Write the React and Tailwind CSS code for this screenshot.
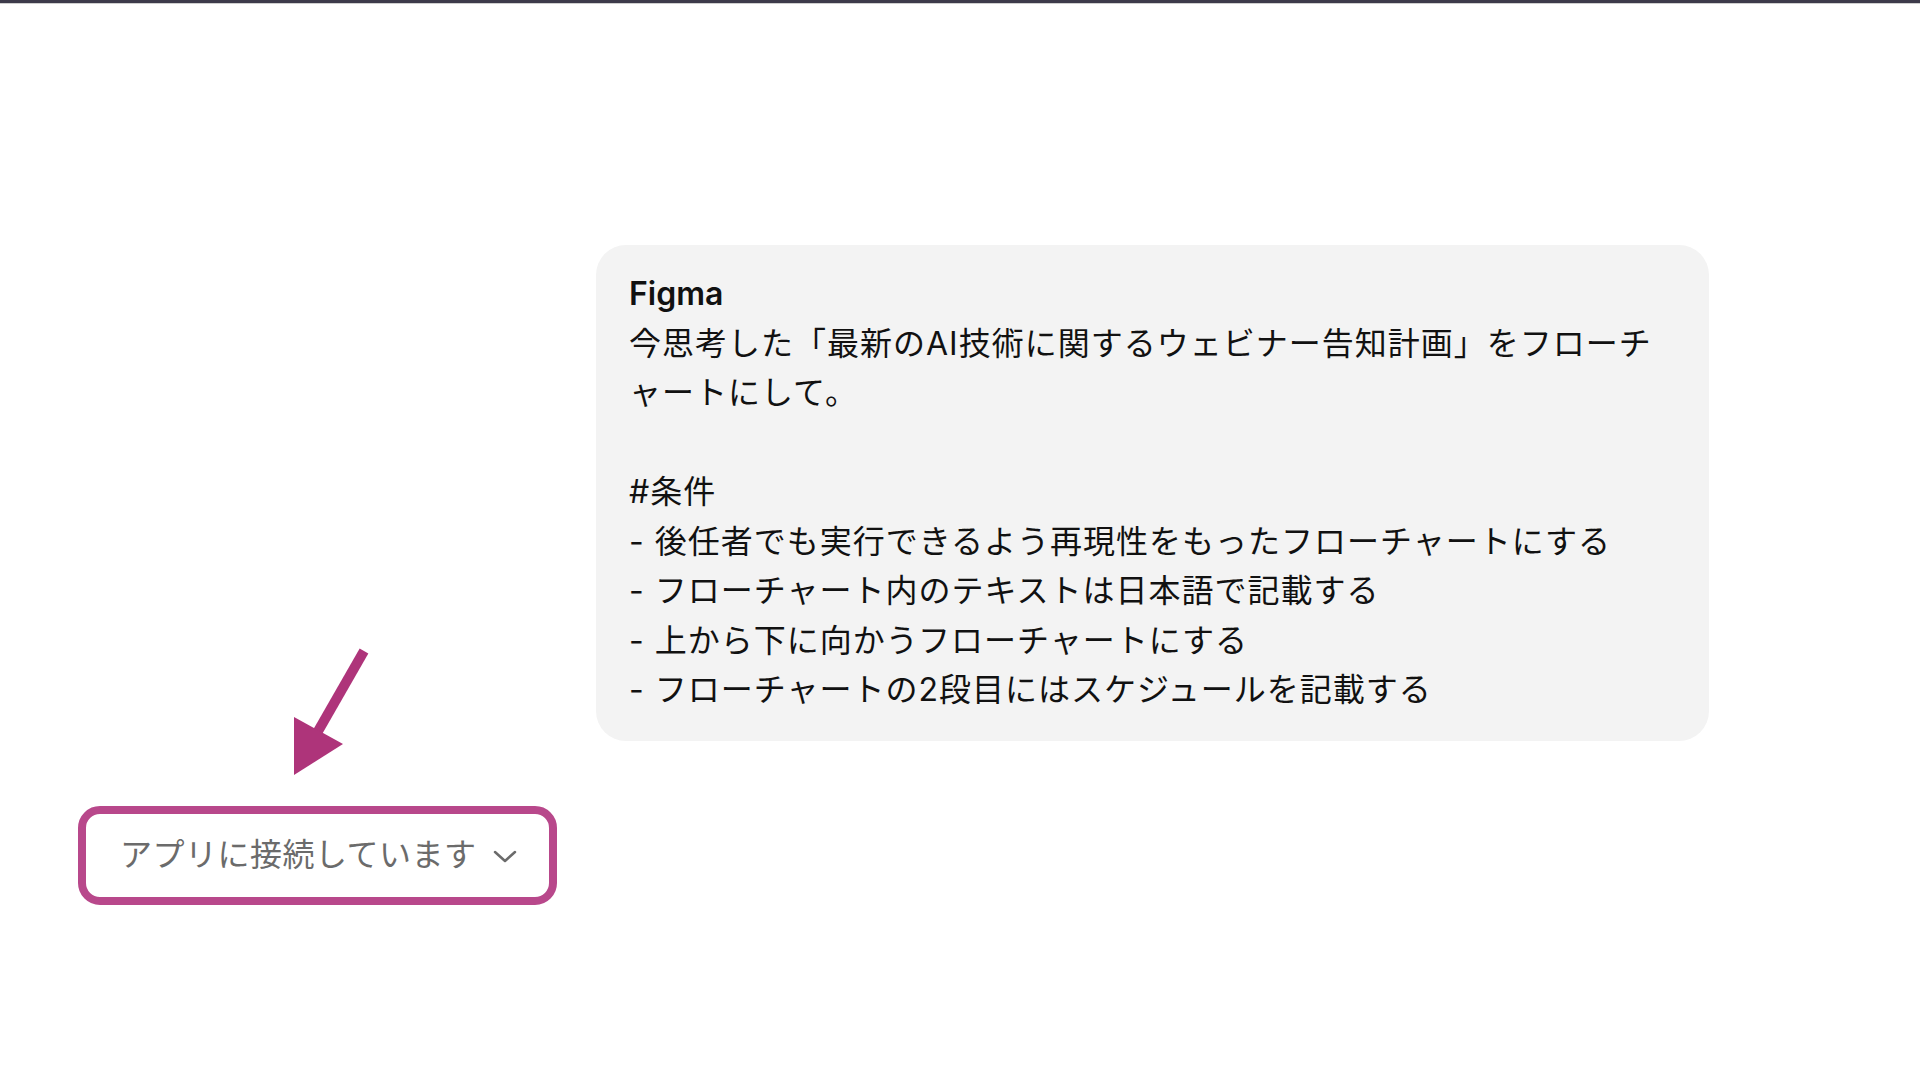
import React from "react";

const lines = [
  "今思考した「最新のAI技術に関するウェビナー告知計画」をフローチ",
  "ャートにして。",
  "",
  "#条件",
  "- 後任者でも実行できるよう再現性をもったフローチャートにする",
  "- フローチャート内のテキストは日本語で記載する",
  "- 上から下に向かうフローチャートにする",
  "- フローチャートの2段目にはスケジュールを記載する",
];

const App = () => {
  return (
    <div
      className="relative w-full h-[1080px] bg-white overflow-hidden"
      style={{ fontFamily: "Inter, 'Noto Sans CJK JP', sans-serif" }}
    >
      {/* window edge */}
      <div className="h-[3px] bg-[#3d3a4a]" />
      <div className="h-px bg-[#cfcfcf]" />

      <div className="pt-[241px]">
        {/* message bubble */}
        <div className="ml-[596px] w-[1113px] rounded-[30px] bg-[#f3f3f3] px-[33px] pt-[24px] pb-[26px] text-[32px] leading-[49.5px] tracking-[1px] text-[#111]">
          <div className="font-semibold tracking-normal">Figma</div>
          {lines.map((line, i) => (
            <div key={i} className="whitespace-pre">
              {line || "\u00a0"}
            </div>
          ))}
        </div>

        {/* highlighted status button */}
        <div className="ml-[78px] mt-[65px] w-[479px] h-[99px] rounded-[22px] border-[8px] border-[#b8488b] flex items-center pl-[34px]">
          <span className="text-[32px] tracking-[0.5px] text-[#6b6b6b]">
            アプリに接続しています
          </span>
          <svg
            className="ml-[16px] mt-[4px]"
            width="24"
            height="14"
            viewBox="0 0 24 14"
            fill="none"
          >
            <path
              d="M2 2 L12 11 L22 2"
              stroke="#6b6b6b"
              strokeWidth="2.5"
              strokeLinecap="round"
              strokeLinejoin="round"
            />
          </svg>
        </div>
      </div>

      {/* annotation arrow */}
      <svg
        className="absolute left-[280px] top-[640px]"
        width="100"
        height="145"
        viewBox="0 0 100 145"
      >
        <line x1="84" y1="11" x2="37" y2="93" stroke="#ae347a" strokeWidth="10" />
        <polygon points="14,77 63,104 14,135" fill="#ae347a" />
      </svg>
    </div>
  );
};

export default App;
